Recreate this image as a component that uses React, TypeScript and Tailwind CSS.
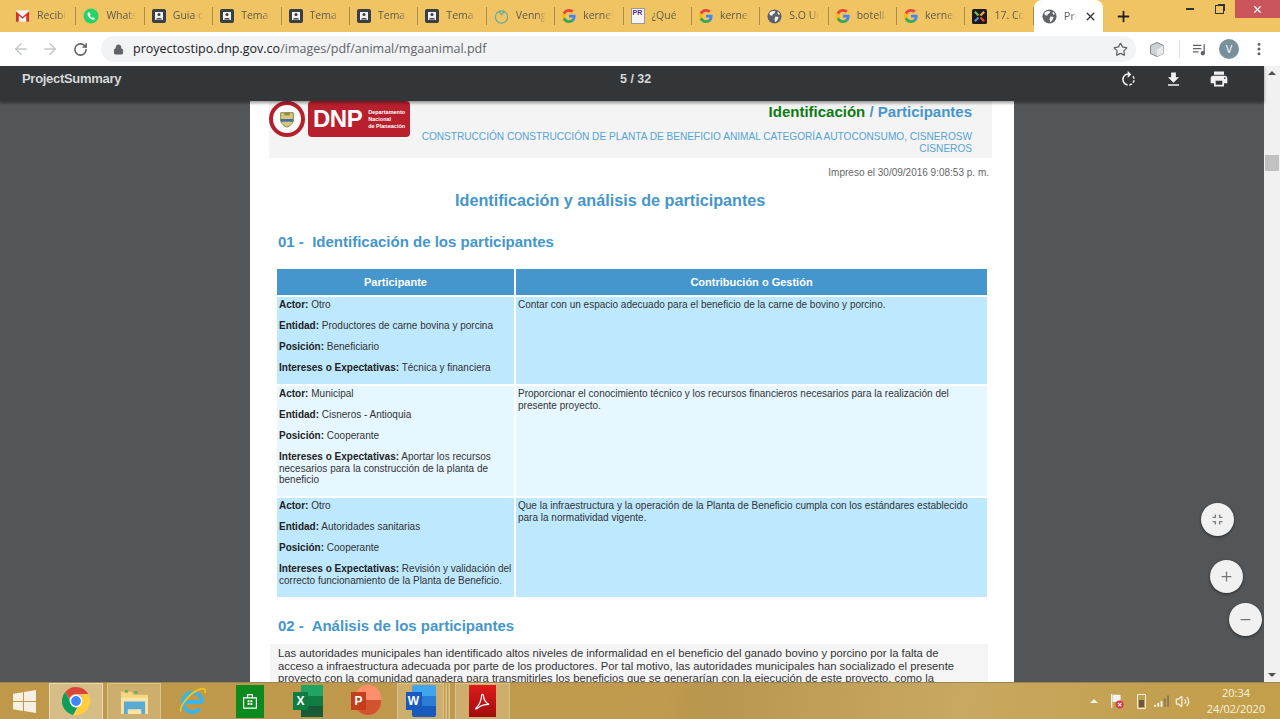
import { ArrowLeft, ArrowRight, RotateCw, Lock, Star, MoreVertical, Plus, Minus, X, Volume2 } from 'lucide-react'

function GoogleIcon() {
  return (
    <svg viewBox="0 0 48 48" className="w-[14px] h-[14px] shrink-0">
      <path fill="#EA4335" d="M24 9.5c3.5 0 6.6 1.2 9.1 3.6l6.8-6.8C35.8 2.5 30.4 0 24 0 14.6 0 6.5 5.4 2.6 13.2l7.9 6.2C12.4 13.7 17.7 9.5 24 9.5z" />
      <path fill="#4285F4" d="M46.5 24.5c0-1.6-.1-3.1-.4-4.5H24v9h12.7c-.6 3-2.2 5.5-4.7 7.2l7.7 6c4.5-4.2 6.8-10.3 6.8-17.7z" />
      <path fill="#FBBC05" d="M10.5 28.6c-.5-1.4-.8-3-.8-4.6s.3-3.2.8-4.6l-7.9-6.2C.9 16.5 0 20.1 0 24s.9 7.5 2.6 10.8l7.9-6.2z" />
      <path fill="#34A853" d="M24 48c6.5 0 11.9-2.1 15.9-5.8l-7.7-6c-2.2 1.4-4.9 2.3-8.2 2.3-6.3 0-11.6-4.2-13.5-9.9l-7.9 6.2C6.5 42.6 14.6 48 24 48z" />
    </svg>
  )
}

function GmailIcon() {
  return (
    <svg viewBox="0 0 16 14" className="w-[15px] h-[14px] shrink-0">
      <path fill="#f4f4f4" d="M1 1h14v12H1z" />
      <path fill="#d93025" d="M1 2l7 6 7-6v11h-3V6.5L8 10 4 6.5V13H1z" />
    </svg>
  )
}

function WhatsappIcon() {
  return (
    <svg viewBox="0 0 16 16" className="w-[16px] h-[16px] shrink-0">
      <circle cx="8" cy="8" r="7.5" fill="#25d366" />
      <path fill="#fff" d="M5.4 4.2c-.8.6-1.1 1.6-.6 3 .8 2 2.4 3.6 4.4 4.3 1.3.4 2.4-.1 2.8-1.1l-1.8-1.2-.9.8c-1-.4-1.9-1.3-2.4-2.4l.8-.9-1.1-2.3z" />
    </svg>
  )
}

function DocIcon() {
  return (
    <svg viewBox="0 0 14 14" className="w-[14px] h-[14px] shrink-0">
      <rect width="14" height="14" rx="2" fill="#3a3f45" />
      <rect x="3" y="3" width="8" height="8" fill="#f1f1f1" />
      <circle cx="7" cy="5.5" r="1.5" fill="#3a3f45" />
      <path d="M4 10.500c0-2 6-2 6 0z" fill="#3a3f45" />
    </svg>
  )
}

function VennIcon() {
  return (
    <svg viewBox="0 0 16 16" className="w-[15px] h-[15px] shrink-0" fill="none" stroke="#5ea9a6" strokeWidth="1.2">
      <circle cx="8" cy="8.5" r="6.5" />
      <path d="M5 2.500 8 6l3-3.500" />
    </svg>
  )
}

function PrIcon() {
  return (
    <div className="w-[14px] h-[16px] shrink-0 bg-[#f4f4f4] border border-[#999] text-[7px] leading-[8px] font-bold text-[#5a2d82] pl-[1px] [font-family:'Liberation_Sans',sans-serif]">
      PR
    </div>
  )
}

function JoomlaIcon() {
  return (
    <svg viewBox="0 0 16 16" className="w-[15px] h-[15px] shrink-0">
      <rect width="16" height="16" rx="2" fill="#1a1a1a" />
      <path d="M3 3l4 4" stroke="#7ac143" strokeWidth="2.4" />
      <path d="M13 3L9 7" stroke="#f9a541" strokeWidth="2.4" />
      <path d="M3 13l4-4" stroke="#5091cd" strokeWidth="2.4" />
      <path d="M13 13L9 9" stroke="#f44321" strokeWidth="2.4" />
    </svg>
  )
}

function GlobeIcon() {
  return (
    <svg viewBox="0 0 16 16" className="w-[15px] h-[15px] shrink-0">
      <circle cx="8" cy="8" r="7.5" fill="#5f6368" />
      <path fill="#f5f5f5" d="M3 3.500 6 2l3 .5-1 2-2 1v1.500H4L2.500 5.500zM9 8l3.500.5L11 12l-2 2-1-3zM12 3l2 2.500-2 .5-1-2z" />
    </svg>
  )
}

const tabs = [
  { icon: <GmailIcon />, title: 'Recibi' },
  { icon: <WhatsappIcon />, title: 'Whats' },
  { icon: <DocIcon />, title: 'Guia d' },
  { icon: <DocIcon />, title: 'Tema' },
  { icon: <DocIcon />, title: 'Tema' },
  { icon: <DocIcon />, title: 'Tema' },
  { icon: <DocIcon />, title: 'Tema' },
  { icon: <VennIcon />, title: 'Venng' },
  { icon: <GoogleIcon />, title: 'kernel' },
  { icon: <PrIcon />, title: '¿Qué' },
  { icon: <GoogleIcon />, title: 'kernel' },
  { icon: <GlobeIcon />, title: 'S.O Ur' },
  { icon: <GoogleIcon />, title: 'botella' },
  { icon: <GoogleIcon />, title: 'kernel' },
  { icon: <JoomlaIcon />, title: '17. Co' },
]

function TabStrip() {
  return (
    <div className="h-[32px] shrink-0 bg-[#f0c462] flex pl-[8px] [font-family:'Open_Sans',sans-serif]">
      {tabs.map((tab, index) => (
        <div key={index} className="w-[68.4px] h-[32px] flex items-center pl-[7px]">
          {tab.icon}
          <span className="ml-[7px] text-[10.5px] text-[#5d5a4e] w-[30px] overflow-hidden whitespace-nowrap [mask-image:linear-gradient(90deg,#000_70%,transparent)]">{tab.title}</span>
          <div className="ml-auto w-px h-[18px] bg-[#a98c4a]" />
        </div>
      ))}
      {/* active tab */}
      <div className="w-[69px] h-[32px] bg-white rounded-t-[8px] flex items-center pl-[8px] gap-[7px]">
        <GlobeIcon />
        <span className="text-[11px] text-[#5f6368] w-[13px] overflow-hidden whitespace-nowrap [mask-image:linear-gradient(90deg,#000_60%,transparent)]">Pro</span>
        <X className="w-[13px] h-[13px] text-[#333]" strokeWidth={2.5} />
      </div>
      <div className="w-[42px] flex items-center justify-center">
        <Plus className="w-[17px] h-[17px] text-[#222]" strokeWidth={2.5} />
      </div>
      <div className="flex-1 flex items-start justify-end">
        <div className="w-[38px] h-[18px] flex items-center justify-center">
          <div className="w-[8px] h-[2px] bg-[#333]" />
        </div>
        <div className="w-[20px] h-[18px] flex items-center justify-center">
          <div className="w-[9px] h-[9px] border border-[#333] shadow-[2px_-2px_0_-1px_#333]" />
        </div>
        <div className="w-[45px] h-[18px] ml-[6px] bg-[#c9545a] flex items-center justify-center">
          <X className="w-[11px] h-[11px] text-white" strokeWidth={3} />
        </div>
      </div>
    </div>
  )
}

function AddressBar() {
  return (
    <div className="h-[34px] shrink-0 bg-white flex items-center [font-family:'Open_Sans',sans-serif]">
      <div className="w-[101px] flex items-center pl-[12px] gap-[11px]">
        <ArrowLeft className="w-[18px] h-[18px] text-[#c4c7ca]" strokeWidth={2} />
        <ArrowRight className="w-[18px] h-[18px] text-[#c4c7ca]" strokeWidth={2} />
        <RotateCw className="ml-[3px] w-[15px] h-[15px] text-[#5f6368]" strokeWidth={2.5} />
      </div>
      <div className="w-[1035px] h-[26px] bg-[#f1f3f4] rounded-full flex items-center pl-[12px] pr-[8px]">
        <Lock className="w-[11px] h-[11px] text-[#5f6368] fill-[#5f6368]" />
        <span className="ml-[9px] text-[12.5px] text-[#202124] whitespace-nowrap">
          proyectostipo.dnp.gov.co<span className="text-[#5f6368]">/images/pdf/animal/mgaanimal.pdf</span>
        </span>
        <Star className="w-[15px] h-[15px] ml-auto text-[#5f6368]" strokeWidth={2} />
      </div>
      <svg viewBox="0 0 16 16" className="ml-[13px] w-[16px] h-[17px]">
        <path d="M8 1l6.500 3v8L8 15l-6.500-3V4z" fill="#cfd2d4" stroke="#80868b" strokeWidth="1" />
        <path d="M8 8v7l6.500-3V4z" fill="#e8eaed" />
      </svg>
      <div className="ml-[14px] w-px h-[18px] bg-[#dadce0]" />
      <svg viewBox="0 0 16 16" className="ml-[12px] w-[15px] h-[15px] text-[#5f6368]" fill="none" stroke="currentColor" strokeWidth="1.4">
        <path d="M1 3.500h9M1 7h9M1 10.500h6M13 2.500v9" />
        <circle cx="11.5" cy="12" r="1.6" fill="currentColor" />
      </svg>
      <div className="ml-[12px] w-[20px] h-[20px] rounded-full bg-[#78909c] text-white text-[11px] flex items-center justify-center">V</div>
      <MoreVertical className="ml-[12px] w-[16px] h-[16px] text-[#5f6368]" strokeWidth={2.5} />
    </div>
  )
}

function PdfToolbar() {
  return (
    <div className="h-[35px] flex items-center bg-[#323639] text-[#e8eaed] [font-family:'Liberation_Sans',sans-serif] shadow-[0_2px_3px_rgba(0,0,0,0.4)] relative z-10">
      <span className="ml-[22px] text-[13px] font-bold tracking-[-0.3px] -mt-[10px] text-[#d5d7d8]">ProjectSummary</span>
      <span className="absolute left-[620px] top-[4px] text-[12.5px] font-bold text-[#d5d7d8]">5 / 32</span>
      <div className="ml-auto mr-[35px] flex items-center gap-[26px] -mt-[9px]">
        <svg viewBox="0 0 24 24" className="w-[19px] h-[19px]" fill="#e8eaed">
          <path d="M15.55 5.55L11 1v3.07C7.06 4.56 4 7.92 4 12s3.05 7.44 7 7.93v-2.02c-2.84-.48-5-2.94-5-5.91s2.16-5.43 5-5.91V10l4.55-4.45zM19.93 11c-.17-1.39-.72-2.73-1.62-3.89l-1.42 1.42c.54.75.88 1.6 1.02 2.47h2.02zM13 17.9v2.02c1.39-.17 2.74-.71 3.9-1.61l-1.44-1.44c-.75.54-1.59.89-2.46 1.03zm3.89-2.42l1.42 1.41c.9-1.16 1.45-2.5 1.62-3.89h-2.02c-.14.87-.48 1.72-1.02 2.48z" />
        </svg>
        <svg viewBox="0 0 24 24" className="w-[19px] h-[19px]" fill="#f1f1f1">
          <path d="M9 3h6v6h4l-7 7-7-7h4zM5 18h14v2H5z" />
        </svg>
        <svg viewBox="0 0 24 24" className="w-[20px] h-[20px]" fill="#f1f1f1">
          <path d="M19 8H5c-1.66 0-3 1.34-3 3v6h4v4h12v-4h4v-6c0-1.66-1.34-3-3-3zm-3 11H8v-5h8v5zm3-7c-.55 0-1-.45-1-1s.45-1 1-1 1 .45 1 1-.45 1-1 1zm-1-9H6v4h12V3z" />
        </svg>
      </div>
    </div>
  )
}

function DnpLogo() {
  return (
    <div className="flex gap-[3px] shrink-0 h-[36px]">
      <div className="w-[36px] h-[36px] rounded-full border-[4px] border-[#b5202c] bg-white flex items-center justify-center">
        <svg viewBox="0 0 20 20" className="w-[18px] h-[20px]">
          <path d="M3 3h14v8c0 4-4 7-7 8-3-1-7-4-7-8z" fill="#d9c77a" stroke="#7a7a3a" strokeWidth="1" />
          <path d="M3 10h14v3H3z" fill="#3f6fa8" />
          <path d="M7 3h6v3H7z" fill="#8a8a4c" />
        </svg>
      </div>
      <div className="w-[102px] h-[36px] bg-[#b9202e] rounded-[4px] flex items-center pl-[5px] text-white [font-family:'Liberation_Sans',sans-serif]">
        <span className="text-[24px] font-bold leading-none tracking-[-0.5px]">DNP</span>
        <div className="ml-[6px] text-[5.5px] leading-[7px] font-bold">
          Departamento
          <br />
          Nacional
          <br />
          de Planeación
        </div>
      </div>
    </div>
  )
}

type Field = { label: string; value: string }

const rows: { fields: Field[]; gestion: string; tone: string; height: string }[] = [
  {
    fields: [
      { label: 'Actor:', value: 'Otro' },
      { label: 'Entidad:', value: 'Productores de carne bovina y porcina' },
      { label: 'Posición:', value: 'Beneficiario' },
      { label: 'Intereses o Expectativas:', value: 'Técnica y financiera' },
    ],
    gestion: 'Contar con un espacio adecuado para el beneficio de la carne de bovino y porcino.',
    tone: 'bg-[#bde8fe]',
    height: 'h-[87px]',
  },
  {
    fields: [
      { label: 'Actor:', value: 'Municipal' },
      { label: 'Entidad:', value: 'Cisneros - Antioquia' },
      { label: 'Posición:', value: 'Cooperante' },
      { label: 'Intereses o Expectativas:', value: 'Aportar los recursos necesarios para la construcción de la planta de beneficio' },
    ],
    gestion: 'Proporcionar el conocimiento técnico y los recursos financieros necesarios para la realización del presente proyecto.',
    tone: 'bg-[#e6f7ff]',
    height: 'h-[110px]',
  },
  {
    fields: [
      { label: 'Actor:', value: 'Otro' },
      { label: 'Entidad:', value: 'Autoridades sanitarias' },
      { label: 'Posición:', value: 'Cooperante' },
      { label: 'Intereses o Expectativas:', value: 'Revisión y validación del correcto funcionamiento de la Planta de Beneficio.' },
    ],
    gestion: 'Que la infraestructura y la operación de la Planta de Beneficio cumpla con los estándares establecido para la normatividad vigente.',
    tone: 'bg-[#bde8fe]',
    height: 'h-[99px]',
  },
]

function ParticipantsTable() {
  return (
    <div className="ml-[27px] w-[710px] grid grid-cols-[237px_471px] gap-[2px] mt-[19px] text-[10px] leading-[11.5px] text-[#333]">
      <div className="h-[26px] pt-[1px] bg-[#4596cc] text-white font-bold text-[11px] flex items-center justify-center">Participante</div>
      <div className="h-[26px] pt-[1px] bg-[#4596cc] text-white font-bold text-[11px] flex items-center justify-center">Contribución o Gestión</div>
      {rows.map((row, index) => (
        <div key={index} className="contents">
          <div className={`${row.tone} ${row.height} pl-[2px] pr-[1px] pt-[2px] flex flex-col gap-[9.5px]`}>
            {row.fields.map((f) => (
              <p key={f.label}>
                <b className="text-[#222]">{f.label}</b> {f.value}
              </p>
            ))}
          </div>
          <div className={`${row.tone} ${row.height} px-[2px] pt-[2px]`}>{row.gestion}</div>
        </div>
      ))}
    </div>
  )
}

function PdfPage() {
  return (
    <div className="w-[764px] h-full bg-white overflow-hidden text-[#333] [font-family:'Liberation_Sans',sans-serif]">
      <div className="ml-[19px] w-[723px] h-[57px] bg-[#f4f4f4] flex">
        <DnpLogo />
        <div className="flex-1 pr-[20px] text-right">
          <div className="mt-[2px] text-[15px] leading-[17px] font-bold text-[#4596cc]">
            <span className="text-[#0f7a14]">Identificación</span> / Participantes
          </div>
          <div className="mt-[11px] text-[10.1px] leading-[11.5px] text-[#55a3d6]">
            CONSTRUCCIÓN CONSTRUCCIÓN DE PLANTA DE BENEFICIO ANIMAL CATEGORÍA AUTOCONSUMO, CISNEROSW CISNEROS
          </div>
        </div>
      </div>
      <div className="mt-[9px] mr-[25px] text-right text-[10px] leading-[12px] text-[#666]">Impreso el 30/09/2016 9:08:53 p. m.</div>
      <h1 className="mt-[12px] ml-[205px] text-[16.2px] leading-[18px] font-bold text-[#4596cc]">Identificación y análisis de participantes</h1>
      <h2 className="mt-[24px] ml-[28px] text-[15px] leading-[17px] font-bold text-[#4596cc] whitespace-pre">01 -  Identificación de los participantes</h2>
      <ParticipantsTable />
      <h2 className="mt-[20px] ml-[28px] text-[15px] leading-[17px] font-bold text-[#4596cc] whitespace-pre">02 -  Análisis de los participantes</h2>
      <div className="mt-[10px] ml-[20px] w-[718px] bg-[#f5f5f5] pl-[8px] pt-[3px] text-[11.25px] leading-[12.5px] text-[#333]">
        <p className="whitespace-nowrap">Las autoridades municipales han identificado altos niveles de informalidad en el beneficio del ganado bovino y porcino por la falta de</p>
        <p className="whitespace-nowrap">acceso a infraestructura adecuada por parte de los productores. Por tal motivo, las autoridades municipales han socializado el presente</p>
        <p className="whitespace-nowrap">proyecto con la comunidad ganadera para transmitirles los beneficios que se generarían con la ejecución de este proyecto, como la</p>
      </div>
    </div>
  )
}

function FloatingButton({ className, children }: { className: string; children: React.ReactNode }) {
  return (
    <div className={`absolute w-[33px] h-[33px] rounded-full bg-[#f1f1f1] shadow-[0_1px_3px_rgba(0,0,0,0.5)] flex items-center justify-center ${className}`}>
      {children}
    </div>
  )
}

function Scrollbar() {
  return (
    <div className="w-[16px] shrink-0 bg-[#f1f1f1] relative flex flex-col items-center justify-between py-[5px]">
      <div className="w-0 h-0 border-x-[4px] border-x-transparent border-b-[4px] border-b-[#505050]" />
      <div className="absolute top-[89px] left-[1px] w-[14px] h-[16px] bg-[#c1c1c1]" />
      <div className="w-0 h-0 border-x-[4px] border-x-transparent border-t-[4px] border-t-[#505050]" />
    </div>
  )
}

function TaskButton({ active, children, stacked }: { active?: boolean; children: React.ReactNode; stacked?: boolean }) {
  return (
    <div className={`relative h-[37px] flex items-center justify-center shrink-0 ${stacked ? 'w-[47px] border border-[#d8c48f] bg-[#cdae6c]' : 'w-[54px]'} ${active ? 'border border-[#e6d9b8] bg-[#d6bc86]' : ''}`}>
      {children}
    </div>
  )
}

function Taskbar() {
  return (
    <div className="h-[37px] shrink-0 border-t border-[#9b8552] bg-[linear-gradient(100deg,#bf9849_0%,#c09a4e_52%,#b8964f_55%,#c9a862_75%,#c3a04f_90%,#c39e4a_100%)] flex items-center [font-family:'Open_Sans',sans-serif]">
      <div className="w-[49px] flex justify-center">
        <svg viewBox="0 0 24 24" className="w-[25px] h-[25px]" fill="#f5f0e2">
          <path d="M1 4.500 10.500 3v8.500H1zM11.500 2.800 23 1v10.500H11.500zM1 12.500h9.500V21L1 19.500zM11.500 12.500H23V23l-11.500-1.800z" />
        </svg>
      </div>
      <TaskButton active>
        <svg viewBox="0 0 32 32" className="w-[30px] h-[30px]">
          <path d="M16 1a15 15 0 0 1 13 7.500H16a7.500 7.500 0 0 0-7 4.800L4.500 6.500A15 15 0 0 1 16 1z" fill="#db4437" />
          <path d="M4.500 6.500 11 18a7.500 7.500 0 0 0 6.300 5.400L13 30.800A15 15 0 0 1 4.500 6.500z" fill="#0f9d58" />
          <path d="M29 8.500A15 15 0 0 1 13 30.800l6.500-11.300A7.500 7.500 0 0 0 21 8.500z" fill="#ffcd40" />
          <circle cx="16" cy="16" r="6" fill="#4285f4" stroke="#fff" strokeWidth="1.5" />
        </svg>
      </TaskButton>
      <div className="w-[4px]" />
      <div className="w-[54px] h-[37px] bg-[#cdae6c] border border-[#d8c48f] flex items-center justify-center">
        <svg viewBox="0 0 30 28" className="w-[29px] h-[27px]">
          <path d="M1 4h11l2 3h15v20H1z" fill="#f3d67e" />
          <path d="M1 10h28v17H1z" fill="#f8e5a6" />
          <path d="M4 14h22v13h-4v-5H8v5H4z" fill="#5aaad6" />
          <path d="M5 2h3v3H5zM15 3h3v3h-3z" fill="#6da85a" />
        </svg>
      </div>
      <div className="w-[62px] flex justify-center">
        <svg viewBox="0 0 30 30" className="w-[29px] h-[30px]" fill="none">
          <path d="M6 16h19.500M25 16a10 10 0 1 0-2.500 7" stroke="#3db4e8" strokeWidth="4" />
          <path d="M3 26C1 22 10 8 22 3c5-2 7 0 6 4" stroke="#f0c419" strokeWidth="1.8" />
        </svg>
      </div>
      <div className="w-[54px] flex justify-center">
        <div className="w-[28px] h-[33px] bg-[#0c8a1e] flex items-center justify-center">
          <svg viewBox="0 0 20 22" className="w-[16px] h-[18px]" fill="none" stroke="#fff" strokeWidth="1.5">
            <path d="M2 7h16v13H2zM7 7V3h6v4" />
            <path fill="#fff" stroke="none" d="M7 10h2.500v2.500H7zM10.500 10H13v2.500h-2.500zM7 13.500h2.500V16H7zM10.500 13.500H13V16h-2.500z" />
          </svg>
        </div>
      </div>
      <div className="w-[62px] flex justify-center">
        <div className="relative w-[30px] h-[32px] flex justify-end">
          <div className="w-[22px] h-full bg-[linear-gradient(#21a366_0_33%,#107c41_33%_66%,#185c37_66%)]" />
          <div className="absolute left-0 top-[7px] w-[15px] h-[18px] bg-[#107c41] text-white text-[12px] font-bold flex items-center justify-center [font-family:'Liberation_Sans',sans-serif]">X</div>
        </div>
      </div>
      <div className="w-[54px] flex justify-center">
        <div className="relative w-[30px] h-[32px] flex justify-end">
          <div className="w-[26px] h-[30px] rounded-full bg-[linear-gradient(#ff8f6b_0_50%,#d35230_50%)]" />
          <div className="absolute left-0 top-[7px] w-[15px] h-[18px] bg-[#c43e1c] text-white text-[12px] font-bold flex items-center justify-center [font-family:'Liberation_Sans',sans-serif]">P</div>
        </div>
      </div>
      <div className="w-[4px]" />
      <TaskButton stacked>
        <div className="relative w-[30px] h-[32px] flex justify-end">
          <div className="w-[24px] h-full rounded-[2px] bg-[linear-gradient(#41a5ee_0_33%,#2b7cd3_33%_66%,#185abd_66%)]" />
          <div className="absolute left-0 top-[7px] w-[16px] h-[18px] bg-[#185abd] text-white text-[12px] font-bold flex items-center justify-center [font-family:'Liberation_Sans',sans-serif]">W</div>
        </div>
      </TaskButton>
      <div className="w-[2px] h-[37px] ml-[1px] bg-[#cdae6c] border-r border-[#d8c48f]" />
      <div className="w-[2px] h-[37px] ml-[1px] bg-[#cdae6c] border-r border-[#d8c48f]" />
      <div className="w-[5px]" />
      <div className="w-[55px] h-[37px] bg-[#cdae6c] border border-[#d8c48f] flex items-center justify-center">
        <div className="w-[27px] h-[32px] bg-[linear-gradient(#e01b1b,#a00c0c)] flex items-center justify-center">
          <svg viewBox="0 0 20 20" className="w-[19px] h-[19px]" fill="none" stroke="#fff" strokeWidth="1.3">
            <path d="M3 17c3-2 6-8 6-13 0-2 2-2 2 0 0 4 3 8 6 9-4 0-9 1-12 4-1 1-3 1-2 0z" />
          </svg>
        </div>
      </div>
      <div className="ml-auto flex items-center pr-[14px]">
        <div className="w-0 h-0 border-x-[4px] border-x-transparent border-b-[4px] border-b-[#f5f0e2]" />
        <svg viewBox="0 0 16 18" className="ml-[11px] w-[16px] h-[16px]">
          <path d="M2 1v16" stroke="#eee" strokeWidth="1.5" />
          <path d="M3 2h9v8H3z" fill="#f5f5f5" />
          <circle cx="11" cy="13" r="4.5" fill="#d9363e" />
          <path d="M9 11l4 4M13 11l-4 4" stroke="#fff" strokeWidth="1.2" />
        </svg>
        <div className="ml-[12px] w-[9px] h-[15px] border border-[#f5f0e2] rounded-[1px] p-[1px] flex items-end">
          <div className="w-full h-[7px] bg-[#6b5b3a]" />
        </div>
        <svg viewBox="0 0 16 12" className="ml-[8px] w-[15px] h-[12px]" fill="#f5f0e2">
          <path d="M0 10h2v2H0zM3.500 8h2v4h-2zM7 6h2v6H7z" />
          <path d="M10.500 3h2v9h-2zM14 0h2v12h-2z" fill="#8a7a55" />
        </svg>
        <Volume2 className="ml-[6px] w-[15px] h-[15px] text-[#f5f0e2]" strokeWidth={2} />
        <div className="ml-[16px] w-[60px] text-center text-[11px] leading-[16px] text-[#f8f2df]">
          20:34
          <br />
          24/02/2020
        </div>
      </div>
    </div>
  )
}

export default function App() {
  return (
    <div className="w-[1280px] h-[719px] flex flex-col overflow-hidden bg-[#525659]">
      <TabStrip />
      <AddressBar />
      <div className="flex-1 min-h-0 flex">
        <div className="flex-1 min-w-0 flex flex-col">
          <PdfToolbar />
          <div className="relative flex-1 min-h-0 bg-[#525659] flex justify-center">
            <PdfPage />
            <FloatingButton className="left-[1201px] top-[402px]">
              <svg viewBox="0 0 24 24" className="w-[17px] h-[17px]" fill="#808080">
                <path d="M5 16h3v3h2v-5H5v2zm3-8H5v2h5V5H8v3zm6 11h2v-3h3v-2h-5v5zm2-11V5h-2v5h5V8h-3z" />
              </svg>
            </FloatingButton>
            <FloatingButton className="left-[1210px] top-[459px]">
              <Plus className="w-[15px] h-[15px] text-[#757575]" strokeWidth={2} />
            </FloatingButton>
            <FloatingButton className="left-[1229px] top-[502px]">
              <Minus className="w-[15px] h-[15px] text-[#757575]" strokeWidth={2} />
            </FloatingButton>
          </div>
        </div>
        <Scrollbar />
      </div>
      <Taskbar />
    </div>
  )
}
